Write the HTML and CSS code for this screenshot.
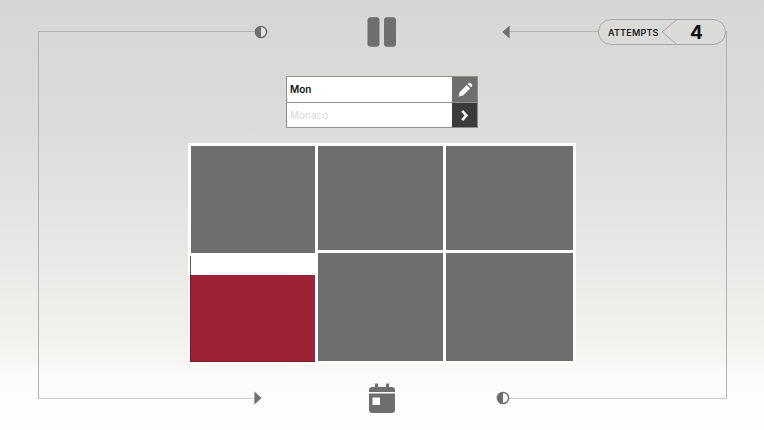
FILE: index.html
```html
<!DOCTYPE html>
<html lang="en">
<head>
<meta charset="utf-8">
<title>Attempts</title>
<link rel="stylesheet" href="styles.css">
</head>
<body>
<main class="stage">
  <div class="frame frame-left"></div>
  <div class="frame frame-right"></div>

  <header class="bar bar-top">
    <svg class="half" viewBox="0 0 14 14"><circle cx="7" cy="7" r="5.6" fill="#e2e2e0" stroke="#6e6e6e" stroke-width="1.5"/><path d="M7 1.400A5.600 5.600 0 0 0 7 12.600Z" fill="#6e6e6e"/></svg>
    <svg class="pause" viewBox="0 0 30 30"><rect x="0.500" y="0.300" width="12" height="29.400" rx="3" fill="#6e6e6e"/><rect x="17" y="0.300" width="12" height="29.400" rx="3" fill="#6e6e6e"/></svg>
    <svg class="arrow arrow-back" viewBox="0 0 8 14"><path d="M7.600 0.500V13.500L0.400 7Z" fill="#6e6e6e"/></svg>
    <div class="pill">
      <svg class="notch" viewBox="0 0 18 26"><path d="M16.500 0L1 13L16.500 26" fill="none" stroke="#a9a9a7" stroke-width="1"/></svg>
      <span class="pill-label">ATTEMPTS</span>
      <span class="pill-value">4</span>
    </div>
  </header>

  <form class="entry">
    <div class="entry-row">
      <div class="entry-field entry-strong">Mon</div>
      <div class="entry-btn btn-edit">
        <svg viewBox="0 0 16 16" class="btn-icon btn-icon-edit"><path d="M1.600 14.600L2.600 10.200L9.800 3L13.200 6.400L6 13.600Z M10.800 2L11.800 1.100C12.300 .7 13 .7 13.500 1.100L15 2.600C15.400 3.100 15.400 3.800 15 4.300L14.100 5.300Z" fill="#fff"/></svg>
      </div>
    </div>
    <div class="entry-row">
      <div class="entry-field entry-hint">Monaco</div>
      <div class="entry-btn btn-go">
        <svg viewBox="0 0 16 16" class="btn-icon"><path d="M5.500 3L10 8L5.500 13" fill="none" stroke="#fff" stroke-width="2.800"/></svg>
      </div>
    </div>
  </form>

  <section class="board">
    <div class="col col-one">
      <div class="tile tile-tall"></div>
      <div class="tile-gap"></div>
      <div class="tile tile-red"></div>
    </div>
    <div class="col col-two">
      <div class="tile tile-upper"></div>
      <div class="tile tile-lower"></div>
    </div>
    <div class="col col-three">
      <div class="tile tile-upper"></div>
      <div class="tile tile-lower"></div>
    </div>
  </section>

  <footer class="bar bar-bottom">
    <svg class="arrow arrow-forward" viewBox="0 0 8 14"><path d="M0.400 0.500V13.500L7.600 7Z" fill="#6e6e6e"/></svg>
    <svg class="calendar" viewBox="0 0 26 30"><path d="M6 0.500H9V4H17V0.500H20V4H23C24.700 4 26 5.300 26 7V9H0V7C0 5.300 1.300 4 3 4H6Z" fill="#6e6e6e"/><path d="M0 10.500H26V27C26 28.700 24.700 30 23 30H3C1.300 30 0 28.700 0 27Z M3.500 14.500V22H11V14.500Z" fill="#6e6e6e" fill-rule="evenodd"/></svg>
    <svg class="half half-end" viewBox="0 0 14 14"><circle cx="7" cy="7" r="5.600" fill="#fbfbf9" stroke="#6e6e6e" stroke-width="1.500"/><path d="M7 1.400A5.600 5.600 0 0 0 7 12.600Z" fill="#6e6e6e"/></svg>
  </footer>
</main>
</body>
</html>
```
FILE: styles.css
```css
* { box-sizing: border-box; }
html, body { margin: 0; padding: 0; }
body {
  width: 764px;
  height: 430px;
  overflow: hidden;
  font-family: "Inter", "Liberation Sans", sans-serif;
  background: linear-gradient(180deg, #d6d6d4 0%, #dcdcda 30%, #e6e6e4 55%, #f2f2ee 80%, #f6f6f2 84%, #fbfbfa 87%, #fefefc 100%);
}
.stage {
  position: relative;
  width: 764px;
  height: 430px;
  display: flex;
  flex-direction: column;
  align-items: center;
}
.frame { position: absolute; border: 0 solid #b0b0ae; }
.frame-left {
  left: 38px; top: 31px; width: 220px; height: 368px;
  border-width: 1px 0 1px 1px;
  border-bottom-color: #cbcbc9;
}
.frame-right {
  left: 508px; top: 31px; width: 219px; height: 368px;
  border-width: 0 1px 1px 0;
  border-bottom-color: #cbcbc9;
}
.frame-right::before {
  content: "";
  position: absolute;
  left: 0; top: 0; width: 92px;
  border-top: 1px solid #b0b0ae;
}
.bar {
  position: relative;
  width: 100%;
  display: flex;
  align-items: center;
}
.bar-top { margin-top: 19px; height: 26px; padding-left: 254px; }
.half { width: 14px; height: 14px; flex: none; }
.pause { width: 30px; height: 30px; flex: none; margin-left: 99px; }
.arrow { width: 8px; height: 14px; flex: none; }
.arrow-back { margin-left: 105px; }
.pill {
  position: relative;
  flex: none;
  width: 128px;
  height: 26px;
  margin-left: 88px;
  border: 1px solid #a9a9a7;
  border-radius: 13px;
  display: flex;
  align-items: center;
  background: #dadad8;
}
.notch { position: absolute; left: 62px; top: -1px; width: 18px; height: 26px; }
.pill-label {
  margin-left: 9px;
  width: 66px;
  font-size: 9px;
  font-weight: 600;
  letter-spacing: 0.2px;
  color: #222;
}
.pill-value {
  margin-left: 16px;
  font-size: 19px;
  font-weight: 700;
  color: #111;
}
.entry {
  position: relative;
  width: 192px;
  margin-top: 31px;
  margin-bottom: 0;
  border: 1px solid #8f8f8f;
  background: #fff;
}
.entry-row { display: flex; height: 25px; }
.entry-row + .entry-row { height: 25px; border-top: 1px solid #8f8f8f; }
.entry-field {
  flex: 1;
  padding-left: 3px;
  font-size: 10px;
  line-height: 25px;
}
.entry-strong { font-weight: 600; color: #111; }
.entry-hint { color: #d8d8d8; }
.entry-btn { width: 25px; display: flex; align-items: center; justify-content: center; }
.btn-edit { background: #6e6e6e; }
.btn-go { background: #3b3b3b; }
.btn-icon { width: 15px; height: 15px; }
.btn-icon-edit { width: 16px; height: 16px; }
.board {
  position: relative;
  width: 388px;
  height: 221px;
  margin-top: 15px;
  padding: 3px;
  background: #fff;
  display: flex;
  gap: 3px;
}
.col { display: flex; flex-direction: column; }
.col-one { width: 124px; }
.col-two { width: 125px; gap: 3px; }
.col-three { width: 127px; gap: 3px; }
.tile { background: #6e6e6e; }
.tile-tall { height: 107px; }
.tile-gap {
  height: 22px;
  margin-left: -1px;
  background: linear-gradient(#555, #555) left 3px / 1px 100% no-repeat;
}
.tile-red {
  flex: 1;
  margin: 0 0 -1px -1px;
  background: #9d2235;
  border: 1px solid #7a1a2a;
  border-top: 0;
  border-right: 0;
}
.tile-upper { height: 104px; }
.tile-lower { flex: 1; }
.bar-bottom { margin-top: 19px; height: 30px; padding-left: 254px; }
.calendar { width: 26px; height: 30px; flex: none; margin-left: 107px; }
.half-end { margin-left: 101px; }
```
